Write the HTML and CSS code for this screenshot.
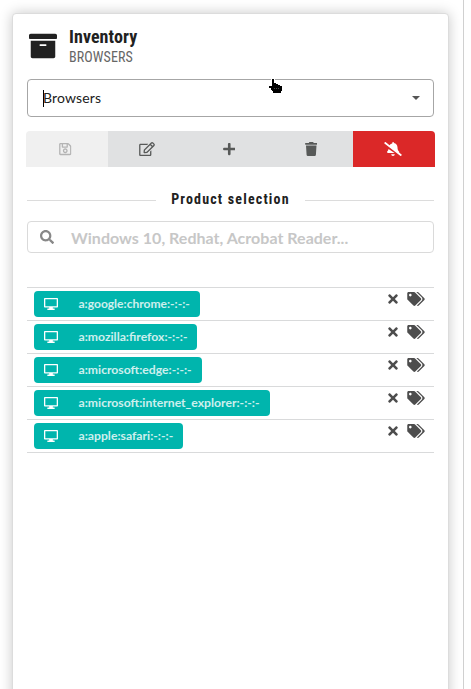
FILE: index.html
```html
<!DOCTYPE html>
<html lang="en">
<head>
<meta charset="utf-8">
<title>Inventory</title>
<link rel="stylesheet" href="styles.css">
</head>
<body>
<svg class="defs" width="0" height="0">
  <symbol id="archive" viewBox="0 0 512 512"><path d="M32 448c0 17.700 14.300 32 32 32h384c17.700 0 32-14.300 32-32V160H32v288zm160-212c0-6.600 5.400-12 12-12h104c6.600 0 12 5.400 12 12v8c0 6.600-5.400 12-12 12H204c-6.600 0-12-5.400-12-12v-8zM480 32H32C14.300 32 0 46.300 0 64v48c0 8.800 7.200 16 16 16h480c8.800 0 16-7.200 16-16V64c0-17.700-14.300-32-32-32z"/></symbol>
  <symbol id="save" viewBox="0 0 448 512"><path d="M433.900 129.900l-83.900-83.900A48 48 0 0 0 316.100 32H48C21.500 32 0 53.500 0 80v352c0 26.500 21.500 48 48 48h352c26.500 0 48-21.500 48-48V163.900a48 48 0 0 0-14.100-34zM272 80v80H144V80h128zm122 352H54a6 6 0 0 1-6-6V86a6 6 0 0 1 6-6h42v104c0 13.300 10.700 24 24 24h176c13.300 0 24-10.700 24-24V83.900l78.200 78.200a6 6 0 0 1 1.800 4.200V426a6 6 0 0 1-6 6zM224 232c-48.500 0-88 39.500-88 88s39.500 88 88 88 88-39.500 88-88-39.500-88-88-88zm0 128c-22.100 0-40-17.900-40-40s17.900-40 40-40 40 17.900 40 40-17.900 40-40 40z"/></symbol>
  <symbol id="edit" viewBox="0 0 576 512"><path d="M402.300 344.900l32-32c5-5 13.700-1.500 13.700 5.700V464c0 26.500-21.500 48-48 48H48c-26.500 0-48-21.500-48-48V112c0-26.500 21.500-48 48-48h273.500c7.100 0 10.700 8.600 5.700 13.700l-32 32c-1.500 1.500-3.500 2.300-5.700 2.300H48v352h352V350.500c0-2.100.8-4.100 2.300-5.600zm156.600-201.800L296.300 405.700l-90.400 10c-26.200 2.900-48.500-19.200-45.600-45.600l10-90.400L432.900 17.100c22.900-22.900 59.900-22.900 82.700 0l43.200 43.200c22.900 22.900 22.900 60 .1 82.800zM460.100 174L402 115.900 216.200 301.800l-7.300 65.300 65.300-7.300L460.100 174zm64.800-79.700l-43.200-43.200c-4.100-4.100-10.800-4.100-14.800 0L436 82l58.100 58.100 30.900-30.900c4-4.200 4-10.800-.1-14.900z"/></symbol>
  <symbol id="plus" viewBox="0 0 448 512"><path d="M416 208H272V64c0-17.700-14.300-32-32-32h-32c-17.700 0-32 14.300-32 32v144H32c-17.700 0-32 14.300-32 32v32c0 17.700 14.300 32 32 32h144v144c0 17.700 14.300 32 32 32h32c17.700 0 32-14.300 32-32V304h144c17.700 0 32-14.300 32-32v-32c0-17.700-14.300-32-32-32z"/></symbol>
  <symbol id="trash" viewBox="0 0 448 512"><path d="M432 32H312l-9.400-18.700A24 24 0 0 0 281.100 0H166.800a23.700 23.700 0 0 0-21.400 13.300L136 32H16A16 16 0 0 0 0 48v32a16 16 0 0 0 16 16h416a16 16 0 0 0 16-16V48a16 16 0 0 0-16-16zM53.200 467a48 48 0 0 0 47.900 45h245.800a48 48 0 0 0 47.900-45L416 128H32z"/></symbol>
  <symbol id="bell-slash" viewBox="0 0 640 512"><path d="M633.800 458.100l-90.600-70.100c3-6.200 4.800-12.900 4.800-20 0-9-3.200-17.500-8.600-23.900-19.300-20.800-55.500-52-55.500-154.300 0-77.700-54.500-139.900-127.900-155.200V32c0-17.700-14.300-32-32-32s-32 14.300-32 32v20.800c-40.300 8.400-74.600 31-97.500 62.700L45.500 3.400C38.500-2 28.500-.8 23 6.200L3.400 31.500c-5.400 7-4.200 17 2.800 22.400l588.400 454.700c7 5.400 17 4.200 22.500-2.800l19.600-25.300c5.400-6.800 4.100-16.900-2.900-22.400zM157.200 251.500c-8.500 43-27.800 69.300-44.700 85.900-5.500 6-8.500 17.300-8.500 26.600 0 20.400 12 36 32 36h241.600L157.200 251.500zM320 512c35.300 0 64-28.700 64-64H256c0 35.300 28.700 64 64 64z"/></symbol>
  <symbol id="search" viewBox="0 0 512 512"><path d="M505 442.700L405.300 343c-4.500-4.500-10.600-7-17-7H372c27.600-35.300 44-79.700 44-128C416 93.100 322.900 0 208 0S0 93.100 0 208s93.100 208 208 208c48.300 0 92.700-16.400 128-44v16.300c0 6.400 2.500 12.500 7 17l99.700 99.700c9.400 9.400 24.600 9.400 33.900 0l28.300-28.300c9.400-9.400 9.400-24.600.1-34zM208 336c-70.700 0-128-57.200-128-128 0-70.700 57.200-128 128-128 70.700 0 128 57.200 128 128 0 70.700-57.200 128-128 128z"/></symbol>
  <symbol id="times" viewBox="0 0 352 512"><path d="M242.700 256l100.100-100.100c12.300-12.300 12.300-32.200 0-44.500l-22.200-22.200c-12.300-12.300-32.200-12.300-44.500 0L176 189.300 75.900 89.200c-12.300-12.300-32.200-12.300-44.500 0L9.200 111.500c-12.300 12.300-12.300 32.200 0 44.500L109.300 256 9.200 356.100c-12.300 12.300-12.300 32.200 0 44.500l22.200 22.200c12.300 12.300 32.200 12.300 44.500 0L176 322.700l100.100 100.100c12.300 12.300 32.200 12.300 44.500 0l22.200-22.200c12.300-12.300 12.300-32.200 0-44.500L242.700 256z"/></symbol>
  <symbol id="tags" viewBox="0 0 640 512"><path d="M497.900 225.900L286.100 14.100A48 48 0 0 0 252.100 0H48C21.500 0 0 21.500 0 48v204.100a48 48 0 0 0 14.100 33.900l211.800 211.900c18.700 18.700 49.100 18.700 67.900 0l204.100-204.100c18.800-18.800 18.800-49.200 0-67.900zM112 160c-26.500 0-48-21.500-48-48s21.500-48 48-48 48 21.500 48 48-21.500 48-48 48zm513.900 133.800L421.800 497.900c-18.700 18.700-49.100 18.700-67.900 0l-.4-.4L527.600 323.500c17-17 26.400-39.600 26.400-63.600s-9.400-46.600-26.400-63.600L331.400 0h48.700a48 48 0 0 1 33.900 14.100l211.900 211.800c18.700 18.700 18.700 49.100 0 67.900z"/></symbol>
  <symbol id="desktop" viewBox="0 0 14 12"><path fill-rule="evenodd" d="M.8 0h12.400q.8 0 .8.800v8q0 .8-.8.800H8.800v1h1.400q.6 0 .6.700t-.6.700H3.800q-.6 0-.6-.7t.6-.7h1.400v-1H.8Q0 9.600 0 8.800v-8Q0 0 .8 0zm.5 1.200v7h11.400v-7z"/></symbol>
</svg>

<main class="page">
  <section class="card">
    <header class="header">
      <svg class="header-icon"><use href="#archive"/></svg>
      <div>
        <h1 class="title">Inventory</h1>
        <div class="subtitle">BROWSERS</div>
      </div>
    </header>

    <div class="dropdown"><span class="caret"></span><span class="value">Browsers</span><span class="arrow"></span></div>

    <div class="buttons">
      <button class="button disabled"><svg class="w12"><use href="#save"/></svg></button>
      <button class="button"><svg class="w16"><use href="#edit"/></svg></button>
      <button class="button"><svg class="w12"><use href="#plus"/></svg></button>
      <button class="button"><svg class="w12"><use href="#trash"/></svg></button>
      <button class="button red"><svg class="w18"><use href="#bell-slash"/></svg></button>
    </div>

    <div class="divider"><span>Product selection</span></div>

    <div class="search"><svg><use href="#search"/></svg><span>Windows 10, Redhat, Acrobat Reader...</span></div>

    <ul class="list">
      <li class="item"><span class="label"><svg><use href="#desktop"/></svg><span>a:google:chrome:-:-:-</span></span><span class="actions"><svg class="times"><use href="#times"/></svg><svg class="tags"><use href="#tags"/></svg></span></li>
      <li class="item"><span class="label wide"><svg><use href="#desktop"/></svg><span>a:mozilla:firefox:-:-:-</span></span><span class="actions"><svg class="times"><use href="#times"/></svg><svg class="tags"><use href="#tags"/></svg></span></li>
      <li class="item"><span class="label wide"><svg><use href="#desktop"/></svg><span>a:microsoft:edge:-:-:-</span></span><span class="actions"><svg class="times"><use href="#times"/></svg><svg class="tags"><use href="#tags"/></svg></span></li>
      <li class="item"><span class="label wide"><svg><use href="#desktop"/></svg><span>a:microsoft:internet_explorer:-:-:-</span></span><span class="actions"><svg class="times"><use href="#times"/></svg><svg class="tags"><use href="#tags"/></svg></span></li>
      <li class="item"><span class="label wide"><svg><use href="#desktop"/></svg><span>a:apple:safari:-:-:-</span></span><span class="actions"><svg class="times"><use href="#times"/></svg><svg class="tags"><use href="#tags"/></svg></span></li>
    </ul>
  </section>
</main>

<svg class="pointer" viewBox="0 0 17 17"><path d="M4 2h2v4h2v1h2v1h2v1h2v5h-1v2H5v-2H4v-1H3v-2H1V9h3z"/><path class="knuckles" d="M6 11.500h1M8 11.500h1M10 11.500h1"/></svg>
</body>
</html>
```

FILE: styles.css
```css
* { box-sizing: border-box; }

body {
  margin: 0;
  height: 689px;
  overflow: hidden;
  background: #fff;
  color: #212121;
  font: 14px/20px Lato, "Liberation Sans", sans-serif;
}

svg { display: block; fill: currentColor; flex: none; }
.defs { position: absolute; }

.page {
  width: 464px;
  height: 689px;
  padding: 13px 14px 0 12px;
  border-right: 1px solid #d0d0d0;
  overflow: hidden;
}

.card {
  height: 720px;
  padding: 13px 14px;
  border: 1px solid #dcdcdc;
  border-radius: 4px;
  background: #fff;
  box-shadow: 0 0 13px rgba(0, 0, 0, .22);
}

.header {
  display: flex;
  height: 52px;
  padding-left: 2px;
}
.header-icon { width: 28px; height: 28px; margin: 5px 12px 0 0; }

.title, .subtitle, .divider {
  font-family: "Roboto Condensed", Roboto, sans-serif;
  font-stretch: 75%;
}
.title { margin: 0; font-size: 18px; line-height: 20px; font-weight: 700; letter-spacing: .08px; }
.subtitle { font-size: 14px; line-height: 20px; color: #666; letter-spacing: .1px; }

.dropdown {
  display: flex;
  align-items: center;
  height: 38px;
  padding: 0 13px 0 15px;
  border: 1px solid #a6a6a6;
  border-radius: 4px;
}
.caret { width: 1px; height: 17px; margin-right: -1px; background: #000; }
.value { flex: 1; letter-spacing: .14px; }
.arrow {
  border: 4px solid transparent;
  border-top-color: #555;
  border-bottom: 0;
}

.buttons {
  display: flex;
  height: 36px;
  margin: 14px -1px 0;
  border-radius: 4px 4px 0 0;
  overflow: hidden;
}
.button {
  display: flex;
  flex: 1;
  align-items: center;
  justify-content: center;
  padding: 0 3px 0 0;
  border: 0;
  background: #e0e1e2;
  color: #575958;
}
.button svg { height: 14px; }
.disabled { background: #f0f0f0; color: #b4b4b4; }
.red { background: #db2828; color: #fff; }
.w12 { width: 12.5px; }
.w16 { width: 16px; }
.w18 { width: 18px; }

.divider {
  display: flex;
  align-items: center;
  height: 20px;
  margin-top: 22px;
  font-size: 14px;
  font-weight: 700;
  letter-spacing: 1.18px;
  white-space: nowrap;
}
.divider::before, .divider::after {
  content: "";
  flex: 1;
  height: 1px;
  margin-top: 3px;
  background: #dcdcdc;
}
.divider::before { margin-right: 15px; }
.divider::after { margin-left: 15px; }

.search {
  display: flex;
  align-items: center;
  height: 32px;
  margin-top: 12px;
  padding-left: 12px;
  border: 1px solid #dadada;
  border-radius: 4px;
  color: #c7c7c7;
  font-size: 16px;
  font-weight: 700;
}
.search svg { width: 14px; height: 14px; margin-right: 17px; color: #888; }
.search span { padding-top: 2px; letter-spacing: .02px; }

.list {
  margin: 34px 0 0;
  padding: 0;
  list-style: none;
  border-top: 1px solid #d9dadb;
}
.item {
  display: flex;
  justify-content: space-between;
  height: 33px;
  padding: 3px 9px 0 7px;
  border-bottom: 1px solid #d9dadb;
}
.label {
  display: flex;
  align-items: center;
  height: 26px;
  padding: 0 10px;
  border-radius: 4px;
  background: #00b5ad;
  color: #fff;
  font-size: 12.06px;
  font-weight: 700;
}
.wide { font-size: 12.2px; }
.label svg { width: 14px; height: 12px; margin-right: 20.5px; }
.label span { opacity: .8; }
.actions { display: flex; gap: 9px; color: #4d4d4d; padding-top: 1px; }
.times { width: 10px; height: 14px; }
.tags { width: 18px; height: 14px; }

.pointer {
  position: absolute;
  left: 268px;
  top: 77px;
  width: 17px;
  height: 17px;
  stroke: #fff;
  stroke-width: 2px;
  paint-order: stroke;
  fill: #000;
}
.knuckles { stroke: #777; stroke-width: .6px; }
```
